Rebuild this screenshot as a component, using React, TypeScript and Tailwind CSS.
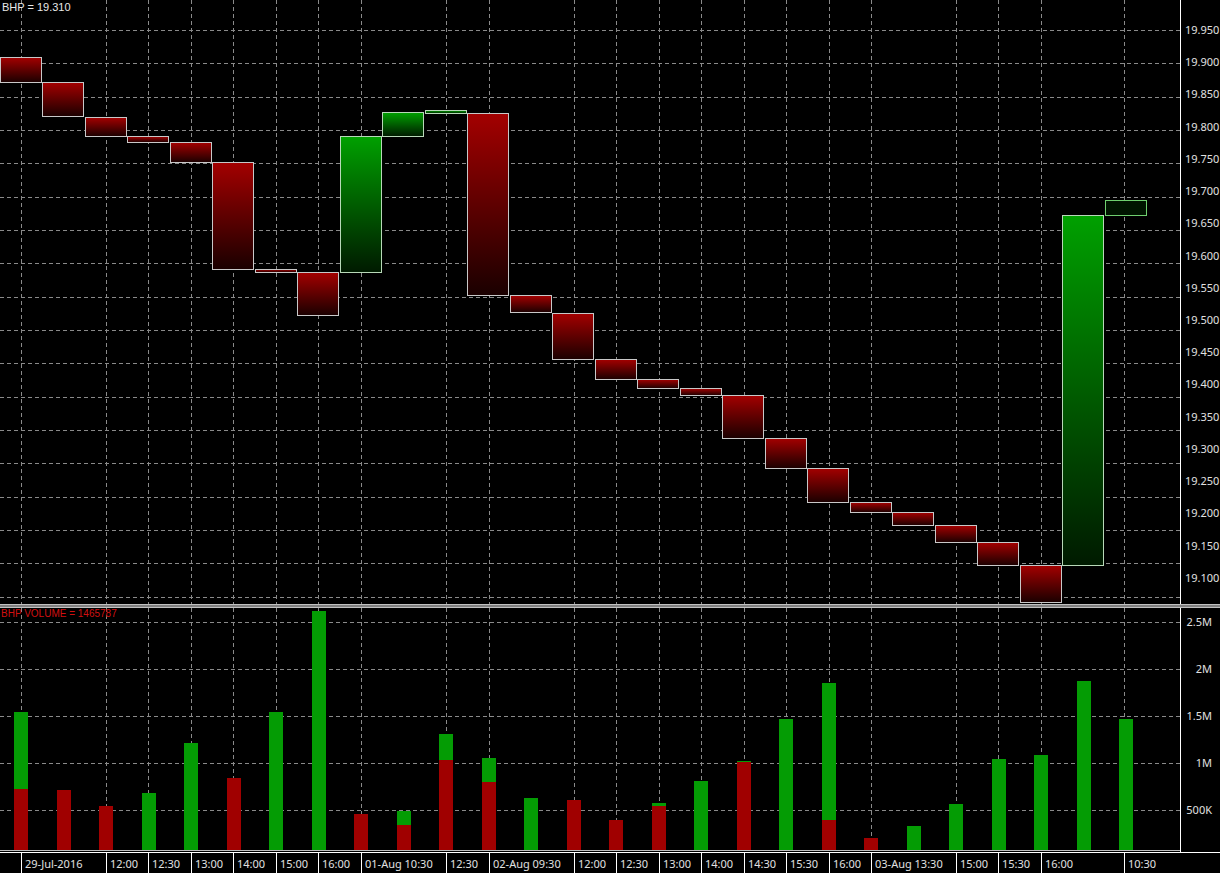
const W = 1180
const SLOT = 42.5
const gridX = [21, 106, 148, 191, 233, 276, 318, 361, 446, 489, 574, 616, 659, 701, 744, 786, 829, 871, 956, 998, 1041, 1124]

const candles: [number, number, "r" | "g"][] = [
  [57, 82, "r"], [82, 116, "r"], [117, 136, "r"], [136, 142, "r"], [142, 162, "r"], [162, 269, "r"],
  [269, 272, "r"], [272, 315, "r"], [136, 272, "g"], [112, 136, "g"], [110, 113, "g"], [113, 295, "r"],
  [295, 312, "r"], [313, 359, "r"], [359, 379, "r"], [379, 388, "r"], [388, 395, "r"], [395, 438, "r"],
  [438, 468, "r"], [468, 502, "r"], [502, 512, "r"], [512, 525, "r"], [525, 542, "r"], [542, 565, "r"],
  [565, 602, "r"], [215, 565, "g"], [200, 215, "g"],
]

// [greenTop, redTop] in page y; null = none
const volumes: [number | null, number | null][] = [
  [712, 789], [null, 790], [null, 806], [793, null], [743, null], [null, 778], [712, null], [611, null],
  [null, 814], [811, 825], [734, 760], [758, 782], [798, null], [null, 800], [null, 820], [803, 806],
  [781, null], [761, 762], [719, null], [683, 820], [null, 838], [826, null], [804, null], [759, null],
  [755, null], [681, null], [719, null],
]

const prices = Array.from({ length: 18 }, (_, k) => ({ y: 30 + k * 33.33, label: (19.95 - k * 0.05).toFixed(3) }))
const volTicks = [
  { y: 622, label: "2.5M" }, { y: 669, label: "2M" }, { y: 716, label: "1.5M" }, { y: 763, label: "1M" }, { y: 810, label: "500K" },
]
const xLabels = ["29-Jul-2016", "12:00", "12:30", "13:00", "14:00", "15:00", "16:00", "01-Aug 10:30", "12:30", "02-Aug 09:30", "12:00", "12:30", "13:00", "14:00", "14:30", "15:30", "16:00", "03-Aug 13:30", "15:00", "15:30", "16:00", "10:30"]

function Grid({ ys, height }: { ys: number[]; height: number }) {
  return (
    <g stroke="#8a8a8a" strokeWidth="1" strokeDasharray="4 3">
      {gridX.map((x) => (
        <line key={x} x1={x + 0.5} x2={x + 0.5} y1={0} y2={height} />
      ))}
      {ys.map((y) => (
        <line key={y} x1={0} x2={W} y1={Math.round(y) + 0.5} y2={Math.round(y) + 0.5} />
      ))}
    </g>
  )
}

function PricePane() {
  return (
    <div className="flex h-[604px]">
      <svg width={W} height={604} className="block shrink-0">
        <defs>
          <linearGradient id="red" x1="0" y1="0" x2="0" y2="1">
            <stop offset="0" stopColor="#a30000" />
            <stop offset="1" stopColor="#1a0000" />
          </linearGradient>
          <linearGradient id="green" x1="0" y1="0" x2="0" y2="1">
            <stop offset="0" stopColor="#00a000" />
            <stop offset="1" stopColor="#001a00" />
          </linearGradient>
        </defs>
        <Grid ys={prices.map((p) => p.y)} height={604} />
        {candles.map(([top, bottom, c], i) => (
          <rect
            key={i}
            x={Math.floor(i * SLOT) + 0.5}
            y={top + 0.5}
            width={41}
            height={Math.max(bottom - top, 1)}
            fill={i === 26 ? "#001400" : c === "r" ? "url(#red)" : "url(#green)"}
            stroke={c === "r" ? "#c8c8c8" : i === 26 ? "#6fcf6f" : "#b8d8b8"}
            strokeWidth="1"
          />
        ))}
        <text x={2} y={11} fill="#e8e8e8" fontSize="11" fontFamily="Liberation Sans, Arial, sans-serif">
          BHP = 19.310
        </text>
        {/* right axis labels */}
      </svg>
      <div className="flex w-[40px] flex-col border-l border-white pt-[24px] pl-[4px] text-[11px] leading-[33.33px] text-[#e0e0e0]">
        {prices.map((p) => (
          <span key={p.label} className="h-[33.33px] leading-[12px]">
            {p.label}
          </span>
        ))}
      </div>
    </div>
  )
}

function VolumePane() {
  const base = 608
  const bottom = 850
  return (
    <div className="flex h-[244px]">
      <svg width={W} height={244} className="block shrink-0">
        <Grid ys={volTicks.map((t) => t.y - base)} height={244} />
        {volumes.map(([g, r], i) => {
          const x = Math.round(21 + i * SLOT) - 7
          return (
            <g key={i}>
              {g !== null && <rect x={x} y={g - base} width={14} height={bottom - g} fill="#049c04" />}
              {r !== null && <rect x={x} y={r - base} width={14} height={bottom - r} fill="#a00000" />}
            </g>
          )
        })}
        <text x={1} y={9} fill="#d01010" fontSize="10" fontFamily="Liberation Sans, Arial, sans-serif">
          BHP VOLUME = 1465787
        </text>
        <line x1={0} x2={W} y1={242.5} y2={242.5} stroke="#bdbdbd" />
      </svg>
      <div className="flex w-[40px] flex-col items-end border-l border-white pt-[8px] pr-[8px] text-[11px] text-[#e0e0e0]">
        {volTicks.map((t) => (
          <span key={t.label} className="h-[47px] leading-[12px]">
            {t.label}
          </span>
        ))}
      </div>
    </div>
  )
}

function XAxis() {
  return (
    <div className="flex h-[21px] border-t border-white">
      <div className="w-[21px] shrink-0" />
      {gridX.map((x, i) => (
        <div
          key={x}
          className="flex h-full shrink-0 items-center border-l border-white pl-[3px]"
          style={{ width: (gridX[i + 1] ?? 1220) - x }}
        >
          <span className="text-[11px] leading-none whitespace-nowrap text-[#e0e0e0]">{xLabels[i]}</span>
        </div>
      ))}
    </div>
  )
}

export default function App() {
  return (
    <div className="h-[873px] w-[1220px] overflow-hidden bg-black font-['Liberation_Sans',Arial,sans-serif]">
      <PricePane />
      <div className="h-[4px] border-y border-[#c0c0c0] bg-[#808080]" />
      <VolumePane />
      <XAxis />
    </div>
  )
}
